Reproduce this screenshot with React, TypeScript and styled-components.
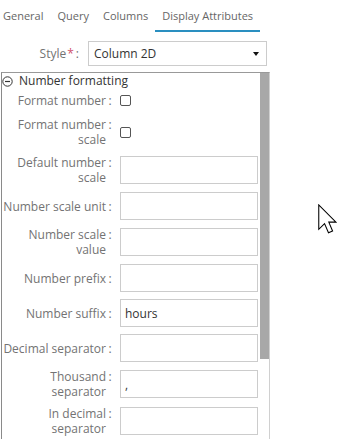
import React from "react";
import styled, { createGlobalStyle } from "styled-components";

const GlobalStyle = createGlobalStyle`
  html, body {
    margin: 0;
    padding: 0;
    background: #fff;
    overflow: hidden;
  }
  body {
    font-family: "Open Sans", sans-serif;
  }
`;

const Page = styled.div`
  position: relative;
  width: 337px;
  height: 439px;
  overflow: hidden;
  font-family: "Open Sans", sans-serif;
`;

const TabBar = styled.div`
  display: flex;
  margin-left: -4px;
`;

const Tab = styled.div<{ $active?: boolean }>`
  padding: 8px 7px 7px;
  font-size: 11px;
  line-height: 15px;
  color: #666;
  white-space: nowrap;
  border-bottom: 2px solid ${(p) => (p.$active ? "#2a8fc0" : "transparent")};
`;

const StyleRow = styled.div`
  display: flex;
  align-items: center;
  gap: 9px;
  margin-top: 9px;
`;

const StyleLabel = styled.div`
  width: 79px;
  text-align: right;
  font-size: 12px;
  line-height: 16px;
  color: #737373;
  white-space: nowrap;
`;

const Required = styled.span`
  color: #d0506a;
  margin: 0 2px 0 1px;
`;

const Select = styled.div`
  box-sizing: border-box;
  width: 179px;
  height: 25px;
  border: 1px solid #ccc;
  display: flex;
  align-items: center;
  justify-content: space-between;
  padding: 0 7px 0 5px;
  font-size: 12px;
  color: #333;
`;

const Caret = styled.span`
  width: 0;
  height: 0;
  border-left: 3.5px solid transparent;
  border-right: 3.5px solid transparent;
  border-top: 4px solid #111;
`;

const Panel = styled.div`
  display: flex;
  margin: 6px 0 0 1px;
  width: 269px;
  height: 367px;
  box-sizing: border-box;
  border-top: 1px solid #999;
  border-left: 1px solid #8a8a8a;
  border-right: 1px solid #d0d0d0;
  overflow: hidden;
`;

const PanelContent = styled.div`
  flex: 1;
  min-width: 0;
`;

const ScrollTrack = styled.div`
  width: 9px;
  flex: none;
  background: #fff;
`;

const ScrollThumb = styled.div`
  height: 286px;
  background: #a8a8a8;
`;

const SectionHeader = styled.div`
  display: flex;
  align-items: center;
  gap: 6px;
  font-size: 12px;
  line-height: 16px;
  color: #333;
`;

const Fields = styled.div`
  display: flex;
  flex-direction: column;
  gap: 7px;
  padding-top: 3px;
`;

const Row = styled.div<{ $check?: boolean }>`
  display: flex;
  align-items: center;
  padding: ${(p) => (p.$check ? "1px 0" : "0")};
`;

const LabelWrap = styled.div`
  display: flex;
  align-items: flex-start;
  margin-right: 6px;
`;

const LabelText = styled.div`
  width: 104px;
  text-align: right;
  font-size: 12px;
  line-height: 15px;
  color: #737373;
`;

const Colon = styled.span`
  width: 8px;
  text-align: center;
  font-size: 12px;
  line-height: 15px;
  color: #737373;
`;

const TextInput = styled.input`
  box-sizing: border-box;
  width: 138px;
  height: 28px;
  margin: 0;
  border: 1px solid #ccc;
  border-radius: 0;
  padding: 0 4px;
  font-family: "Open Sans", sans-serif;
  font-size: 12px;
  color: #333;
  background: #fff;
  outline: none;
`;

const CheckBox = styled.input`
  appearance: none;
  box-sizing: border-box;
  width: 11px;
  height: 11px;
  margin: 0;
  border: 1px solid #555;
  border-radius: 2px;
  background: #fff;
`;

const Cursor = styled.svg`
  position: absolute;
  left: 318px;
  top: 204px;
`;

type FieldProps = { label: string; children: React.ReactNode; check?: boolean };

const Field = ({ label, children, check }: FieldProps) => (
  <Row $check={check}>
    <LabelWrap>
      <LabelText>{label}</LabelText>
      <Colon>:</Colon>
    </LabelWrap>
    {children}
  </Row>
);

const MinusCircle = () => (
  <svg width="11" height="11" viewBox="0 0 11 11">
    <circle cx="5.5" cy="5.5" r="4.7" fill="none" stroke="#333" strokeWidth="1" />
    <line x1="3" y1="5.5" x2="8" y2="5.5" stroke="#333" strokeWidth="1.2" />
  </svg>
);

const textFields: { label: string; value?: string }[] = [
  { label: "Default number scale" },
  { label: "Number scale unit" },
  { label: "Number scale value" },
  { label: "Number prefix" },
  { label: "Number suffix", value: "hours" },
  { label: "Decimal separator" },
  { label: "Thousand separator", value: "," },
  { label: "In decimal separator" },
];

export default function App() {
  return (
    <Page>
      <GlobalStyle />
      <TabBar>
        <Tab>General</Tab>
        <Tab>Query</Tab>
        <Tab>Columns</Tab>
        <Tab $active>Display Attributes</Tab>
      </TabBar>
      <StyleRow>
        <StyleLabel>
          Style<Required>*</Required>:
        </StyleLabel>
        <Select>
          <span>Column 2D</span>
          <Caret />
        </Select>
      </StyleRow>
      <Panel>
        <PanelContent>
          <SectionHeader>
            <MinusCircle />
            <span>Number formatting</span>
          </SectionHeader>
          <Fields>
            <Field label="Format number" check>
              <CheckBox type="checkbox" readOnly />
            </Field>
            <Field label="Format number scale" check>
              <CheckBox type="checkbox" readOnly />
            </Field>
            {textFields.map((f) => (
              <Field key={f.label} label={f.label}>
                <TextInput readOnly defaultValue={f.value ?? ""} />
              </Field>
            ))}
          </Fields>
        </PanelContent>
        <ScrollTrack>
          <ScrollThumb />
        </ScrollTrack>
      </Panel>
      <Cursor width="19" height="30" viewBox="0 0 12.5 19.5">
        <path
          d="M0.5 0.5 L0.5 16.5 L4.3 12.8 L6.9 18.8 L9.6 17.7 L7.1 11.8 L11.8 11.8 Z"
          fill="#fff"
          stroke="#000"
          strokeWidth="0.7"
          strokeLinejoin="miter"
        />
      </Cursor>
    </Page>
  );
}
